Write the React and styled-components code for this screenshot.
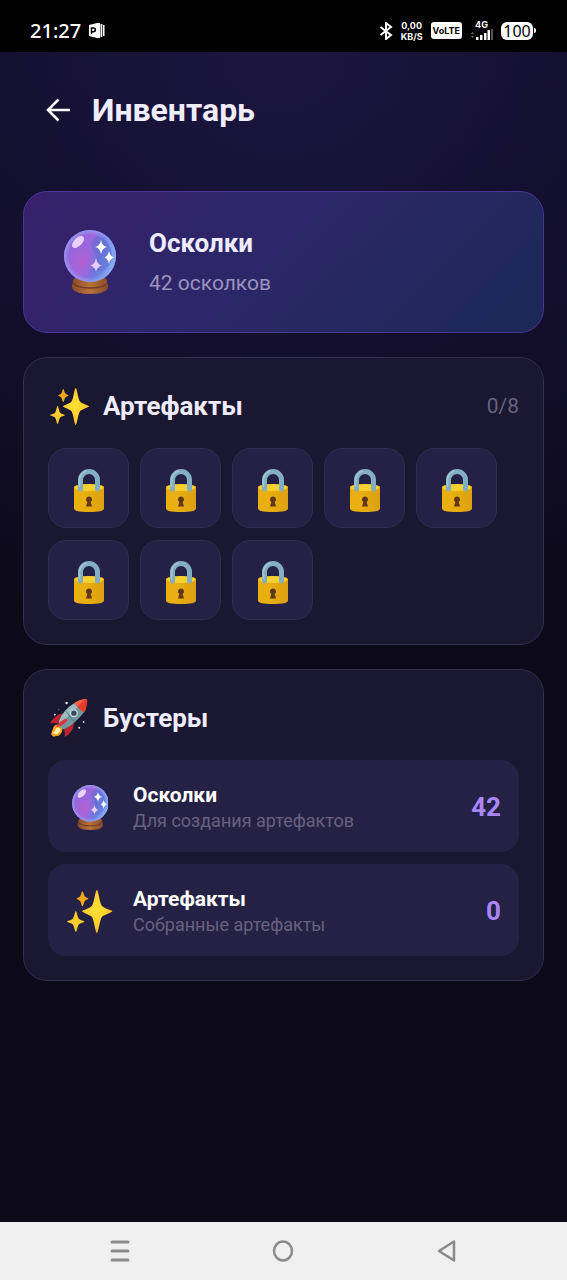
import React from 'react';
import styled, { createGlobalStyle } from 'styled-components';

const GlobalStyle = createGlobalStyle`
    * {
        box-sizing: border-box;
    }

    body {
        margin: 0;
        background: #0c0918;
        font-family: Roboto, "Noto Sans", sans-serif;
        color: #f0ecff;
    }

    h1, h2, h3, p, ul {
        margin: 0;
        padding: 0;
    }

    svg {
        display: block;
    }
`;

const Screen = styled.div`
    display: flex;
    flex-direction: column;
    min-height: 100vh;
`;

const StatusBar = styled.div`
    display: flex;
    justify-content: space-between;
    align-items: center;
    height: 52px;
    padding: 9px 31px 0 30px;
    background: #000;
    color: #fff;
    font-family: "Noto Sans", sans-serif;
`;

const StatusGroup = styled.div`
    display: flex;
    align-items: center;
    gap: ${(props) => props.$gap}px;
`;

const Clock = styled.span`
    font-size: 20px;
    line-height: 24px;
    font-weight: 500;
`;

const NetSpeed = styled.span`
    display: flex;
    flex-direction: column;
    align-items: center;
    font-family: Inter, sans-serif;
    font-size: 9px;
    line-height: 11px;
    font-weight: 700;
`;

const Volte = styled.span`
    padding: 0 2px;
    border-radius: 3px;
    background: #fff;
    color: #000;
    font-family: Inter, sans-serif;
    font-size: 9px;
    line-height: 17px;
    font-weight: 700;
`;

const Signal = styled.span`
    display: flex;
    flex-direction: column;
    align-items: center;
    font-family: Inter, sans-serif;
    font-size: 9px;
    line-height: 8px;
    font-weight: 700;
`;

const Battery = styled.span`
    display: flex;
    align-items: center;
    gap: 1px;

    &::after {
        content: "";
        width: 2px;
        height: 5px;
        border-radius: 0 2px 2px 0;
        background: #fff;
    }
`;

const BatteryLevel = styled.span`
    width: 32px;
    border-radius: 6px;
    background: #fff;
    color: #000;
    font-size: 16px;
    line-height: 18px;
    text-align: center;
`;

const Main = styled.main`
    flex: 1;
    padding: 0 23px 24px;
    background:
        radial-gradient(ellipse 110% 50% at 50% 0, #1b1540 0%, rgba(20, 16, 50, 0.6) 50%, rgba(12, 9, 24, 0) 100%),
        linear-gradient(180deg, #15112f 0%, #0c0918 50%, #0c0918 100%);
`;

const Header = styled.header`
    display: flex;
    align-items: center;
    gap: 20px;
    height: 115px;
    padding-left: 21px;
`;

const BackButton = styled.button`
    padding: 0;
    border: 0;
    background: none;
    color: #fff;
    cursor: pointer;
`;

const Title = styled.h1`
    font-size: 32px;
    line-height: 40px;
    font-weight: 700;
`;

const Cards = styled.div`
    display: flex;
    flex-direction: column;
    gap: 24px;
    padding-top: 24px;
`;

const Card = styled.section`
    padding: 24px;
    border: 1px solid #332d50;
    border-radius: 24px;
    background: #1a1730;
`;

const BalanceCard = styled(Card)`
    display: flex;
    align-items: center;
    gap: 29px;
    padding: 33px 36px;
    border-color: #4a3595;
    background: linear-gradient(135deg, #38206c 0%, #2b2768 45%, #1b2856 100%);
`;

const IconBox = styled.span`
    display: flex;
    flex: none;
    justify-content: center;
    align-items: center;
    width: ${(props) => props.$size}px;
`;

const BalanceTitle = styled.h2`
    font-size: 26px;
    line-height: 36px;
    font-weight: 700;
`;

const BalanceText = styled.p`
    margin-top: 6px;
    color: #9a92bd;
    font-size: 21px;
    line-height: 32px;
`;

const SectionHead = styled.div`
    display: flex;
    align-items: center;
    gap: 13px;
    height: 48px;
    margin-bottom: 18px;
`;

const SectionTitle = styled.h2`
    flex: 1;
    font-size: 26px;
    line-height: 36px;
    font-weight: 700;
`;

const Counter = styled.span`
    color: #67617f;
    font-size: 21px;
    line-height: 32px;
`;

const Slots = styled.ul`
    display: flex;
    flex-wrap: wrap;
    gap: 12px 11px;
    list-style: none;
`;

const Slot = styled.li`
    display: flex;
    justify-content: center;
    align-items: center;
    width: 81px;
    height: 80px;
    padding-top: 4px;
    border: 1px solid #312c4f;
    border-radius: 18px;
    background: #252144;
`;

const Boosters = styled.ul`
    display: flex;
    flex-direction: column;
    gap: 12px;
    list-style: none;
`;

const Booster = styled.li`
    display: flex;
    align-items: center;
    gap: 19px;
    padding: 21px 18px 19px;
    border-radius: 18px;
    background: #252144;
`;

const BoosterInfo = styled.div`
    flex: 1;
`;

const BoosterName = styled.h3`
    font-size: 21px;
    line-height: 28px;
    font-weight: 700;
    color: #fff;
`;

const BoosterText = styled.p`
    color: #67617f;
    font-size: 18px;
    line-height: 24px;
`;

const BoosterValue = styled.span`
    color: #a987fb;
    font-size: 26px;
    line-height: 36px;
    font-weight: 700;
`;

const NavBar = styled.nav`
    display: flex;
    justify-content: space-around;
    align-items: center;
    height: 58px;
    padding: 0 38px;
    background: #f0f0f0;
`;

const NavButton = styled.button`
    padding: 0;
    border: 0;
    background: none;
    color: #8b8b8b;
    cursor: pointer;
`;

const BallIcon = ({ height }) => (
    <svg height={height} viewBox="0 0 52 64" aria-hidden="true">
        <defs>
            <linearGradient id="ball" x1="0" y1="0.3" x2="1" y2="0.6">
                <stop offset="0" stopColor="#8f66dc" />
                <stop offset="0.45" stopColor="#9d66dc" />
                <stop offset="0.7" stopColor="#6f78de" />
                <stop offset="1" stopColor="#78aef2" />
            </linearGradient>
            <radialGradient id="ballGlow" cx="0.5" cy="0.5" r="0.5">
                <stop offset="0" stopColor="#bf5acb" stopOpacity="0.75" />
                <stop offset="1" stopColor="#b765d8" stopOpacity="0" />
            </radialGradient>
            <radialGradient id="ballRim" cx="0.5" cy="0.5" r="0.5">
                <stop offset="0.82" stopColor="#a8b8ff" stopOpacity="0" />
                <stop offset="1" stopColor="#93a4f4" stopOpacity="0.75" />
            </radialGradient>
            <linearGradient id="ballStand" x1="0" y1="0" x2="1" y2="0">
                <stop offset="0" stopColor="#88492b" />
                <stop offset="0.5" stopColor="#b87338" />
                <stop offset="1" stopColor="#88492b" />
            </linearGradient>
        </defs>
        <path d="M11 48 H41 Q44 50 43 53 Q45 55 43.500 59 Q40 64 26 64 Q12 64 8.500 59 Q7 55 9 53 Q8 50 11 48 Z" fill="url(#ballStand)" />
        <path d="M9 53.500 Q13 58 26 58 Q39 58 43 53.500" fill="none" stroke="#743d27" strokeWidth="1.500" />
        <circle cx="26" cy="26" r="26" fill="url(#ball)" />
        <path d="M33 6 Q23 13 30 22 Q37 31 27 42 Q44 44 48 28 Q48 11 33 6 Z" fill="#5f6ccd" opacity="0.5" />
        <ellipse cx="17" cy="32" rx="15" ry="15" fill="url(#ballGlow)" />
        <circle cx="26" cy="26" r="26" fill="url(#ballRim)" />
        <ellipse cx="14" cy="12" rx="7.500" ry="4" transform="rotate(-45 14 12)" fill="#f3dcff" opacity="0.9" />
        <g fill="#fff">
            <path d="M37 10 Q38 16 43 17 Q38 18 37 24 Q36 18 31 17 Q36 16 37 10 Z" />
            <path d="M45 21 Q46 26.500 50 27.500 Q46 28.500 45 34 Q44 28.500 40.500 27.500 Q44 26.500 45 21 Z" />
            <path d="M32 28 Q33 34.500 38 35.500 Q33 36.500 32 42 Q31 36.500 26 35.500 Q31 34.500 32 28 Z" fill="#e9cdfb" />
        </g>
    </svg>
);

const SparklesIcon = ({ height }) => (
    <svg height={height} viewBox="0 0 39 37" aria-hidden="true">
        <defs>
            <radialGradient id="spark" cx="0.45" cy="0.45" r="0.55">
                <stop offset="0" stopColor="#ffdf36" />
                <stop offset="0.6" stopColor="#fdd32f" />
                <stop offset="1" stopColor="#f5b82b" />
            </radialGradient>
        </defs>
        <path d="M25.700 0 C27 0 28 11 30 13.500 C32 16 39 17.200 39 18.300 C39 19.500 32 21 30 23.200 C28 26 27 37 25.700 37 C24.400 37 23.500 26 21.500 23.200 C19.500 21 13 19.500 13 18.300 C13 17.200 19.500 16 21.500 13.500 C23.500 11 24.400 0 25.700 0 Z" fill="url(#spark)" />
        <path d="M13.300 1 C14 1 14.500 4.500 15.400 5.500 C16.400 6.700 18.500 6.800 18.500 7.400 C18.500 8 16.400 8.300 15.400 9.400 C14.500 10.500 14 14 13.300 14 C12.600 14 12.100 10.500 11.200 9.400 C10.200 8.300 8.300 8 8.300 7.400 C8.300 6.800 10.200 6.700 11.200 5.500 C12.100 4.500 12.600 1 13.300 1 Z" fill="#f3a81c" />
        <path d="M7.600 18 C8.400 18 8.900 23 10.200 24.700 C11.500 26.200 15 26.400 15 27.100 C15 27.900 11.500 28.200 10.200 29.600 C8.900 31.200 8.400 36 7.600 36 C6.800 36 6.300 31.200 5 29.600 C3.700 28.200 0 27.900 0 27.100 C0 26.400 3.700 26.200 5 24.700 C6.300 23 6.800 18 7.600 18 Z" fill="#fdcb2e" />
    </svg>
);

const RocketIcon = ({ height }) => (
    <svg height={height} viewBox="0 0 39 40" aria-hidden="true">
        <path d="M4 28 Q6 25 11 27 Q14 31 12 34 Q10 38 6 38 Q3 40 1 36 Q2 34 2 33 Z" fill="#f9a21c" />
        <path d="M6 30 Q10 28 11 32 Q9 36 5 36 Q3 36 3 34 Q6 33 6 30 Z" fill="#fff3a0" />
        <path d="M16 15 Q10 14 6 18 Q2 21 0 25 Q5 24 9 25 L15 21 Z" fill="#b92332" />
        <path d="M24 23 Q25 29 22 33 Q19 37 15 39 Q16 34 14 30 L18 25 Z" fill="#b92332" />
        <path d="M28 3 Q18 7 12 17 Q9 22 9 26 Q10 30 14 31 Q20 29 26 23 Q34 16 37 10 Z" fill="#72989f" />
        <path d="M28 3 Q18 7 12 17 Q9 22 9 26 Q18 19 31 6 Z" fill="#9bbdc1" />
        <path d="M16 12 Q22 20 25 24" fill="none" stroke="#527980" strokeWidth="1" />
        <path d="M25 4 Q31 0 38 0 Q39 6 35 14 Q30 11 25 4 Z" fill="#e53b2d" />
        <path d="M25 4 Q31 0 38 0 Q31 3 29 8 Z" fill="#f36349" />
        <circle cx="24.500" cy="14.500" r="4" fill="#c6d6d9" />
        <circle cx="24.500" cy="14.500" r="2.700" fill="#344e60" />
        <path d="M17 20 Q10 22 6 29 Q13 28 18 22 Z" fill="#dc3340" />
        <g fill="#dfe9f5">
            <circle cx="17" cy="4" r="1.300" />
            <circle cx="5" cy="16" r="1" />
            <circle cx="34.500" cy="23.500" r="0.900" />
            <circle cx="30" cy="29.500" r="1" />
            <circle cx="9" cy="11" r="0.500" />
        </g>
    </svg>
);

const LockIcon = () => (
    <svg width="30" height="43" viewBox="0 0 30 43" role="img" aria-label="Закрыто">
        <defs>
            <linearGradient id="lockBody" x1="0" y1="0" x2="1" y2="0">
                <stop offset="0" stopColor="#e9ae12" />
                <stop offset="0.3" stopColor="#eab010" />
                <stop offset="1" stopColor="#dc9f12" />
            </linearGradient>
        </defs>
        <path d="M0 18 Q0 15.500 15 15.500 Q30 15.500 30 18 V39.500 Q30 43 15 43 Q0 43 0 39.500 Z" fill="url(#lockBody)" />
        <ellipse cx="15" cy="18.500" rx="14.500" ry="3.500" fill="#f8d02f" />
        <path d="M6.500 20 V11 A8.500 8.500 0 0 1 23.500 11 V20" fill="none" stroke="#82aebf" strokeWidth="5" strokeLinecap="round" />
        <path d="M5.500 18 V11 A9 9 0 0 1 13 2" fill="none" stroke="#a6c8d5" strokeWidth="1.500" />
        <path d="M15 27.500 A3 3 0 0 1 16.700 33 L18 37.500 H12 L13.300 33 A3 3 0 0 1 15 27.500 Z" fill="#613719" />
    </svg>
);

const App = () => {
    const slots = Array.from({ length: 8 }, (_, i) => i);

    const boosters = [
        { name: 'Осколки', text: 'Для создания артефактов', value: 42, icon: <BallIcon height={45} /> },
        { name: 'Артефакты', text: 'Собранные артефакты', value: 0, icon: <SparklesIcon height={43} /> },
    ];

    return (
        <Screen>
            <GlobalStyle />

            {/* Status bar */}
            <StatusBar>
                <StatusGroup $gap={7}>
                    <Clock>21:27</Clock>
                    <svg width="17" height="17" viewBox="0 0 17 17" aria-hidden="true">
                        <path d="M1 3 L9 1 V16 L1 14 Z" fill="#fff" />
                        <path d="M3.500 12 V6 H5.500 A1.800 1.800 0 0 1 5.500 9.700 H3.500" fill="none" stroke="#000" strokeWidth="1.500" />
                        <path d="M9 1 H12 V16 H9 Z M12.500 2 H14.300 V15 H12.500 Z M15 3 H16.500 V14 H15 Z" fill="#fff" />
                    </svg>
                </StatusGroup>
                <StatusGroup $gap={8}>
                    <svg width="14" height="18" viewBox="0 0 14 18" aria-hidden="true">
                        <path d="M1.500 5 L12 13 L7 17 V1 L12 5 L1.500 13" fill="none" stroke="#fff" strokeWidth="2" />
                    </svg>
                    <NetSpeed>
                        <span>0,00</span>
                        <span>KB/S</span>
                    </NetSpeed>
                    <Volte>VoLTE</Volte>
                    <Signal>
                        4G
                        <svg width="23" height="11" viewBox="0 0 23 11" aria-hidden="true">
                            <path d="M1 5 L2.500 3 L4 5 Z M1 7 L2.500 9 L4 7 Z" fill="#777" />
                            <path d="M6 8 H8.500 V11 H6 Z M10 6 H12.500 V11 H10 Z M14 4 H16.500 V11 H14 Z M17.500 1 H20 V11 H17.500 Z" fill="#fff" />
                            <path d="M21 0 H23 V11 H21 Z" fill="#555" />
                        </svg>
                    </Signal>
                    <Battery>
                        <BatteryLevel>100</BatteryLevel>
                    </Battery>
                </StatusGroup>
            </StatusBar>

            <Main>
                <Header>
                    <BackButton type="button" aria-label="Назад">
                        <svg width="28" height="28" viewBox="0 0 28 28" fill="none" stroke="currentColor" strokeWidth="2.500">
                            <path d="M26 14 H4 M14.500 3.500 L4 14 L14.500 24.500" />
                        </svg>
                    </BackButton>
                    <Title>Инвентарь</Title>
                </Header>

                <Cards>
                    {/* Balance */}
                    <BalanceCard>
                        <IconBox $size={60}><BallIcon height={64} /></IconBox>
                        <div>
                            <BalanceTitle>Осколки</BalanceTitle>
                            <BalanceText>42 осколков</BalanceText>
                        </div>
                    </BalanceCard>

                    {/* Artifacts */}
                    <Card>
                        <SectionHead>
                            <IconBox $size={42}><SparklesIcon height={37} /></IconBox>
                            <SectionTitle>Артефакты</SectionTitle>
                            <Counter>0/8</Counter>
                        </SectionHead>
                        <Slots>
                            {slots.map((slot) => (
                                <Slot key={slot}><LockIcon /></Slot>
                            ))}
                        </Slots>
                    </Card>

                    {/* Boosters */}
                    <Card>
                        <SectionHead>
                            <IconBox $size={42}><RocketIcon height={39} /></IconBox>
                            <SectionTitle>Бустеры</SectionTitle>
                        </SectionHead>
                        <Boosters>
                            {boosters.map((item) => (
                                <Booster key={item.name}>
                                    <IconBox $size={48}>{item.icon}</IconBox>
                                    <BoosterInfo>
                                        <BoosterName>{item.name}</BoosterName>
                                        <BoosterText>{item.text}</BoosterText>
                                    </BoosterInfo>
                                    <BoosterValue>{item.value}</BoosterValue>
                                </Booster>
                            ))}
                        </Boosters>
                    </Card>
                </Cards>
            </Main>

            {/* System navigation */}
            <NavBar>
                <NavButton type="button" aria-label="Меню">
                    <svg width="22" height="24" viewBox="0 0 22 24" stroke="currentColor" strokeWidth="3" strokeLinecap="round">
                        <path d="M3 3 H19 M3 12 H19 M3 21 H19" />
                    </svg>
                </NavButton>
                <NavButton type="button" aria-label="Домой">
                    <svg width="22" height="24" viewBox="0 0 22 24" fill="none" stroke="currentColor" strokeWidth="2.500">
                        <ellipse cx="11" cy="12" rx="9" ry="9.500" />
                    </svg>
                </NavButton>
                <NavButton type="button" aria-label="Назад">
                    <svg width="22" height="24" viewBox="0 0 22 24" fill="none" stroke="currentColor" strokeWidth="2.500" strokeLinejoin="round">
                        <path d="M18 2.500 V21.500 L3 12 Z" />
                    </svg>
                </NavButton>
            </NavBar>
        </Screen>
    );
};

export default App;
